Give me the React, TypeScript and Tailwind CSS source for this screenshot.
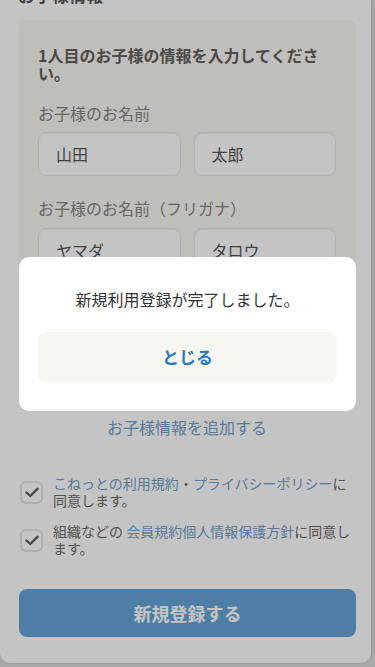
import React from 'react';

const font = "font-['Noto_Sans_CJK_JP','Noto_Sans',sans-serif]";

const NameInput: React.FC<{ value: string }> = ({ value }) => (
  <div className="flex-1 h-[44px] rounded-[8px] bg-white border border-[#e9e6e1] shadow-[inset_0_1px_2px_rgba(0,0,0,0.06)] flex items-center px-[17px] text-[16px] text-[#555]">
    {value}
  </div>
);

const CheckBox: React.FC = () => (
  <div className="w-[23px] h-[23px] shrink-0 rounded-[6px] border-2 border-[#e4e4e4] bg-white flex items-center justify-center">
    <svg width="14" height="11" viewBox="0 0 14 11" fill="none">
      <path d="M1.5 5.5 L5.2 9 L12.5 1.8" stroke="#5e5e5e" strokeWidth="2.4" strokeLinecap="round" strokeLinejoin="round" />
    </svg>
  </div>
);

export default function App() {
  return (
    <div className={`relative w-[375px] h-[667px] overflow-hidden bg-[#dcdcdc] ${font}`}>
      {/* page sheet */}
      <div className="w-[371px] h-[663px] bg-white rounded-b-[10px] shadow-[1px_0_3px_rgba(0,0,0,0.12)] pl-[18px] pr-[15px] overflow-hidden">
        <h2 className="-mt-[15px] h-[20px] leading-[20px] text-[17px] font-bold text-[#555]">お子様情報</h2>

        <div className="mt-[15px] h-[380px] rounded-[8px] bg-[#faf8f4] px-[20px] pt-[26px]">
          <p className="text-[16px] leading-[18px] font-bold text-[#5f5f5f]">
            1人目のお子様の情報を入力してください。
          </p>

          <p className="mt-[20px] text-[16px] leading-[22px] text-[#858585]">お子様のお名前</p>
          <div className="mt-[8px] flex gap-[13px]">
            <NameInput value="山田" />
            <NameInput value="太郎" />
          </div>

          <p className="mt-[21px] text-[16px] leading-[22px] text-[#858585]">お子様のお名前（フリガナ）</p>
          <div className="mt-[9px] flex gap-[13px]">
            <NameInput value="ヤマダ" />
            <NameInput value="タロウ" />
          </div>

          <p className="mt-[21px] text-[16px] leading-[22px] text-[#858585]">生年月日</p>
          <div className="mt-[9px] flex gap-[13px]">
            <NameInput value="2015" />
            <NameInput value="4" />
          </div>
        </div>

        <p className="mt-[16px] text-center text-[16px] leading-[22px] text-[#74a0c7]">お子様情報を追加する</p>

        <div className="mt-[37px] flex items-center gap-[10px] pl-[2px]">
          <CheckBox />
          <p className="text-[14px] leading-[17px] text-[#6a6a6a]">
            <span className="text-[#74a0c7]">こねっとの利用規約</span>・<span className="text-[#74a0c7]">プライバシーポリシー</span>に同意します。
          </p>
        </div>
        <div className="mt-[14px] flex items-center gap-[10px] pl-[2px]">
          <CheckBox />
          <p className="text-[14px] leading-[17px] text-[#6a6a6a]">
            組織などの <span className="text-[#74a0c7]">会員規約個人情報保護方針</span>に同意します。
          </p>
        </div>

        <button className="mt-[32px] w-[337px] ml-[1px] h-[48px] rounded-[8px] bg-[#66a5d9] text-white text-[18px] font-bold">
          新規登録する
        </button>
      </div>

      {/* overlay */}
      <div className="absolute inset-0 bg-black/[0.23]" />

      {/* dialog */}
      <div className="absolute inset-0 flex items-center justify-center">
        <div className="w-[337px] h-[154px] bg-white rounded-[10px] px-[19px] pt-[31px]">
          <p className="text-center text-[16px] leading-[22px] text-[#333]">新規利用登録が完了しました。</p>
          <button className="mt-[22px] w-full h-[50px] rounded-[8px] bg-[#f8f6f2] text-[17px] font-bold text-[#2a7bbb]">
            とじる
          </button>
        </div>
      </div>
    </div>
  );
}
